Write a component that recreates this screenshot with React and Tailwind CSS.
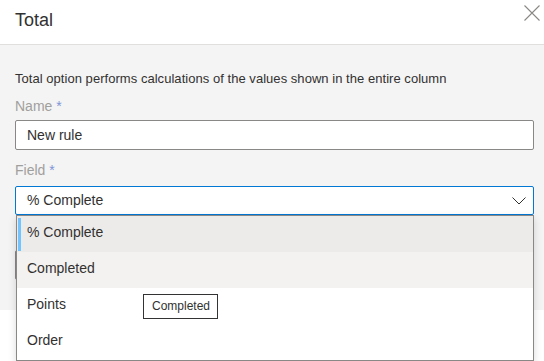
import React from "react";

const font = { fontFamily: '"Liberation Sans", Arial, sans-serif' };

export default function App() {
  return (
    <div
      className="relative w-[544px] h-[361px] overflow-hidden bg-white text-[#323130]"
      style={font}
    >
      <div className="h-[45px] border-b border-[#e1dfdd] flex justify-between pl-[15px]">
        <div className="mt-[8px] text-[18px] leading-[24px] text-[#323130]">Total</div>
        <svg
          className="mt-[5px] mr-[4px]"
          width="16"
          height="16"
          viewBox="0 0 16 16"
          fill="none"
        >
          <path d="M0.5 0.5 L15.5 15.5 M15.5 0.5 L0.5 15.5" stroke="#8a8886" strokeWidth="1.1" />
        </svg>
      </div>

      <div className="h-[265px] bg-[#f4f4f4] pl-[15px] pr-[10px] pt-[26px] flex flex-col">
        <div className="text-[13px] leading-[16px] text-[#323130] tracking-[0.04px]">
          Total option performs calculations of the values shown in the entire column
        </div>
        <div className="mt-[9px] text-[14px] leading-[20px] text-[#a19f9d]">
          Name <span className="text-[#7f95d6]">*</span>
        </div>
        <div className="mt-[4px] h-[30px] border border-[#8a8886] rounded-[2px] bg-white pl-[11px] text-[14px] leading-[28px] text-[#323130]">
          New rule
        </div>
        <div className="mt-[10px] text-[14px] leading-[20px] text-[#a19f9d]">
          Field <span className="text-[#7f95d6]">*</span>
        </div>
        <div className="mt-[6px] h-[29px] border border-[#0078d4] rounded-[2px] bg-white pl-[11px] pr-[7px] flex items-center justify-between text-[14px] leading-[27px] text-[#323130]">
          <span>% Complete</span>
          <svg width="14" height="8" viewBox="0 0 14 8" fill="none">
            <path d="M0.5 0.5 L7 7 L13.5 0.5" stroke="#323130" strokeWidth="1" />
          </svg>
        </div>
        <div className="mt-[35px] h-[30px] border border-[#8a8886] rounded-[2px] bg-white"></div>
      </div>

      {/* dropdown overlay */}
      <div className="absolute left-[16px] top-[215px] w-[518px] h-[146px] border border-[#8a8886] bg-white shadow-[0_3px_8px_rgba(0,0,0,0.15)] flex flex-col text-[14px] text-[#323130]">
        <div className="relative h-[36px] bg-[#edebe9] flex items-center pl-[10px] pb-[4px]">
          <div className="absolute left-[1px] top-[2px] bottom-[1px] w-[3px] bg-[#71c4ff]"></div>
          % Complete
        </div>
        <div className="h-[36px] bg-[#f3f2f1] flex items-center pl-[10px] pb-[4px]">Completed</div>
        <div className="h-[36px] flex items-center pl-[10px] pb-[4px]">Points</div>
        <div className="h-[36px] flex items-center pl-[10px] pb-[4px]">Order</div>
      </div>

      {/* tooltip */}
      <div className="absolute left-[143px] top-[294px] w-[75px] h-[25px] border border-[#333333] bg-white text-[12px] leading-[23px] text-[#323130] pl-[8px]">
        Completed
      </div>
    </div>
  );
}
